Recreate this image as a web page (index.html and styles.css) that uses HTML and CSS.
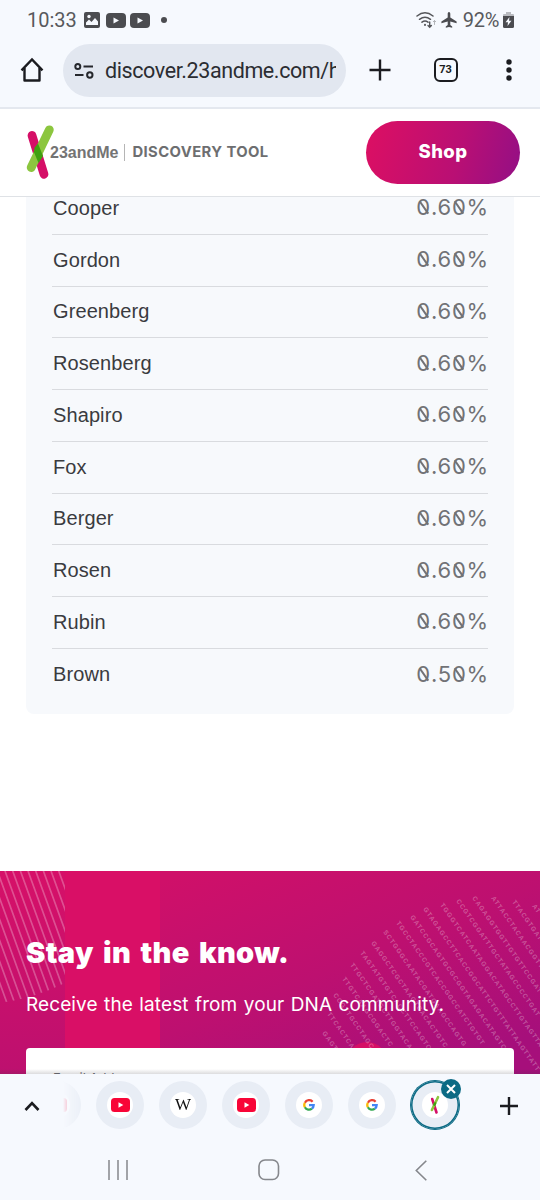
FILE: index.html
```html
<!DOCTYPE html>
<html lang="en">
<head>
  <meta charset="UTF-8">
  <meta name="viewport" content="width=device-width, initial-scale=1.0">
  <title>23andMe Discovery Tool</title>
  <link rel="stylesheet" href="styles.css">
</head>
<body>
  <div class="status-bar">
    <span class="clock">10:33</span>
    <svg class="status-photo" width="16" height="16" viewBox="0 0 16 16"><rect width="16" height="16" rx="2" fill="#4b4c50"/><circle cx="5" cy="4.5" r="1.7" fill="#f6f9fe"/><path d="M2 13V10.5L5 7.5L7.500 10L11 6L14 9.500V13Z" fill="#f6f9fe"/></svg>
    <svg width="20" height="15" viewBox="0 0 20 15"><rect width="20" height="15" rx="4" fill="#4b4c50"/><path d="M7.500 4.500L13 7.500L7.500 10.500Z" fill="#f6f9fe"/></svg>
    <svg width="20" height="15" viewBox="0 0 20 15"><rect width="20" height="15" rx="4" fill="#4b4c50"/><path d="M7.500 4.500L13 7.500L7.500 10.500Z" fill="#f6f9fe"/></svg>
    <span class="dot"></span>
    <div class="status-right">
      <svg width="21" height="18" viewBox="0 0 21 18" fill="none" stroke="#55565a" stroke-width="1.5" stroke-linecap="round"><path d="M1 5Q9 -1.500 17 5M3.500 8.300Q9 4 14.500 8.300M6 11.200Q9 9 12 11.200"/><path d="M9 13.800v.1" stroke-width="2"/><path d="M13.700 11v5M12 14.500l1.700 1.700l1.700-1.700" stroke-width="1.400"/><path d="M18.500 13.500V9.500M17.300 10.700l1.200-1.200l1.200 1.200" stroke="#b3b5b9" stroke-width="1"/></svg>
      <svg width="16" height="16" viewBox="0 0 16 16" fill="#4b4c50"><path d="M8 0C9 0 9.300 1 9.300 2V5.600L15.600 9.600V11.300L9.300 9.500V13L11.200 14.500V15.800L8 15L4.800 15.800V14.500L6.700 13V9.500L.4 11.300V9.600L6.700 5.600V2C6.700 1 7 0 8 0Z"/></svg>
      <span class="battery-text">92%</span>
      <svg width="11" height="16" viewBox="0 0 11 16"><path d="M3 0H8V2H10Q11 2 11 3V5H0V3Q0 2 1 2H3Z" fill="#b9bbc0"/><path d="M0 4H11V14.500Q11 16 9.500 16H1.500Q0 16 0 14.500Z" fill="#4b4c50"/><path d="M6.500 5L2.500 10.200H5L4.500 14L8.500 8.800H6Z" fill="#f6f9fe"/></svg>
    </div>
  </div>

  <div class="toolbar">
    <div class="tool home"><svg width="26" height="26" viewBox="0 0 26 26" fill="none" stroke="#1b1c20" stroke-width="2.400" stroke-linejoin="round"><path d="M5.500 11V23.500H20.500V11"/><path d="M2.500 13.300L13 2.500L23.500 13.300" stroke-linejoin="miter"/></svg></div>
    <div class="url-bar">
      <svg width="20" height="16" viewBox="0 0 20 16" fill="none" stroke="#25272c" stroke-width="2"><circle cx="3.800" cy="3.500" r="2.500"/><path d="M9.500 3.500H19M1 12H9.500"/><circle cx="15.800" cy="12" r="2.700"/></svg>
      <span class="url">discover.23andme.com/h</span>
    </div>
    <div class="tool new-tab"><svg width="22" height="22" viewBox="0 0 22 22" stroke="#1b1c20" stroke-width="2.400"><path d="M11 .5V21.500M.5 11H21.500"/></svg></div>
    <div class="tool tab-switch"><span class="tab-count">73</span></div>
    <div class="tool menu"><svg width="6" height="22" viewBox="0 0 6 22" fill="#1b1c20"><circle cx="3" cy="3" r="2.700"/><circle cx="3" cy="11" r="2.700"/><circle cx="3" cy="19" r="2.700"/></svg></div>
  </div>

  <div class="site-header">
    <svg class="logo" width="28" height="56" viewBox="0 0 28 56" fill="none" stroke-linecap="round" stroke-width="8.800"><path d="M6 10.500L18 49.300" stroke="#d50f67"/><path d="M23.300 4.800L5.200 42.500" stroke="#8cc63f"/><path d="M8.700 22.500L12 18.500L17 31L15.500 33.500L12.500 38L7.900 27Z" fill="#3fa010" stroke="none"/></svg>
    <span class="brand">23andMe</span>
    <span class="divider"></span>
    <span class="product">DISCOVERY TOOL</span>
    <a class="shop" href="#shop">Shop</a>
  </div>

  <div class="content">
    <div class="name-card">
      <div class="row"><span>Cooper</span><span class="pct"><i>0</i>.6<i>0</i>%</span></div>
      <div class="row"><span>Gordon</span><span class="pct"><i>0</i>.6<i>0</i>%</span></div>
      <div class="row"><span>Greenberg</span><span class="pct"><i>0</i>.6<i>0</i>%</span></div>
      <div class="row"><span>Rosenberg</span><span class="pct"><i>0</i>.6<i>0</i>%</span></div>
      <div class="row"><span>Shapiro</span><span class="pct"><i>0</i>.6<i>0</i>%</span></div>
      <div class="row"><span>Fox</span><span class="pct"><i>0</i>.6<i>0</i>%</span></div>
      <div class="row"><span>Berger</span><span class="pct"><i>0</i>.6<i>0</i>%</span></div>
      <div class="row"><span>Rosen</span><span class="pct"><i>0</i>.6<i>0</i>%</span></div>
      <div class="row"><span>Rubin</span><span class="pct"><i>0</i>.6<i>0</i>%</span></div>
      <div class="row"><span>Brown</span><span class="pct"><i>0</i>.5<i>0</i>%</span></div>
    </div>
  </div>

  <div class="newsletter">
    <svg class="pattern" width="540" height="203" viewBox="0 0 540 203">
      <defs>
        <linearGradient id="side" x1="0" y1="0" x2="0" y2="1"><stop offset="0" stop-color="#d61068"/><stop offset="1" stop-color="#bd106f"/></linearGradient>
        <clipPath id="stripes"><path d="M0 0H65V112Q35 127 0 132Z"/></clipPath>
      </defs>
      <rect width="65" height="203" fill="url(#side)"/>
      <rect x="65" width="95" height="203" fill="#d90f66"/>
      <g clip-path="url(#stripes)" stroke="#fff" stroke-opacity=".27" stroke-width="1.700">
        <path d="M-41 0l48 132M-33.300 0l48 132M-25.600 0l48 132M-18 0l48 132M-10.300 0l48 132M-2.600 0l48 132M5 0l48 132M12.700 0l48 132M20.400 0l48 132M28 0l48 132M35.700 0l48 132M43.400 0l48 132M51 0l48 132M58.700 0l48 132"/>
      </g>
      <circle cx="367" cy="191" r="20" fill="#d60f66"/>
      <g class="dna">
        <text transform="translate(322 162) rotate(55)">GAGTC</text>
        <text transform="translate(327 143) rotate(55)">TTCACTCAG</text>
        <text transform="translate(333 124) rotate(55)">CCGTTGCCTAGCA</text>
        <text transform="translate(342 108) rotate(55)">TTGTCAAGCGGACTC</text>
        <text transform="translate(350 94) rotate(55)">TTGCTCGATGCTTGGTACA</text>
        <text transform="translate(360 82) rotate(55)">TAGTATGTGTCACCTTCCAGTC</text>
        <text transform="translate(371 72) rotate(55)">GAGGCTCGCTAAGTCACACTGTC</text>
        <text transform="translate(383 61) rotate(55)">SCTGGGCAATACGATGAAGCCAGTG</text>
        <text transform="translate(396 52) rotate(55)">TGCCTACCCGTCACCGGCCATCTGTGT</text>
        <text transform="translate(410 46) rotate(55)">GATCCGCAGTGCGCGGTAGAGACATAGTC</text>
        <text transform="translate(423 38) rotate(55)">GTAGAGCCTTCACCGGCATTCTGTTTATTAAGTTATT</text>
        <text transform="translate(440 34) rotate(55)">TGGGTCATCAATAGGACATAGCCTTGTAGTTA</text>
        <text transform="translate(456 30) rotate(55)">CCGTCGGATTTGCTATAGCCCCTGAT</text>
        <text transform="translate(472 27) rotate(55)">CAGAGGTGGTTGTGTTCCGAT</text>
        <text transform="translate(491 27) rotate(55)">ATTACCTACAACGGTT</text>
        <text transform="translate(512 31) rotate(55)">TTACGTGAT</text>
        <text transform="translate(532 35) rotate(55)">AT</text>
      </g>
    </svg>
    <h2>Stay in the know.</h2>
    <p>Receive the latest from your DNA community.</p>
    <div class="email-field">Email Address</div>
  </div>

  <div class="tab-strip">
    <div class="strip-button up"><svg width="16" height="12" viewBox="0 0 16 12" fill="none" stroke="#1b1c20" stroke-width="2.600"><path d="M1.500 10L8 3.200L14.500 10"/></svg></div>
    <div class="tabs">
      <div class="tab"><span class="favicon"><svg width="19" height="14" viewBox="0 0 19 14"><rect width="19" height="14" rx="3.500" fill="#f80537"/></svg></span></div>
      <div class="tab"><span class="favicon"><svg width="19" height="14" viewBox="0 0 19 14"><rect width="19" height="14" rx="3.500" fill="#f80537"/><path d="M7.500 4.200L12.300 7L7.500 9.800Z" fill="#fff"/></svg></span></div>
      <div class="tab"><span class="favicon wiki">W</span></div>
      <div class="tab"><span class="favicon"><svg width="19" height="14" viewBox="0 0 19 14"><rect width="19" height="14" rx="3.500" fill="#f80537"/><path d="M7.500 4.200L12.300 7L7.500 9.800Z" fill="#fff"/></svg></span></div>
      <div class="tab"><span class="favicon"><svg width="12" height="12" viewBox="0 0 12 12" fill="none" stroke-width="2.300"><path d="M9.600 2.700A4.700 4.700 0 0 0 1.900 3.700" stroke="#e94235"/><path d="M1.900 3.700A4.700 4.700 0 0 0 1.900 8.300" stroke="#fabb05"/><path d="M1.900 8.300A4.700 4.700 0 0 0 8.900 9.700" stroke="#34a853"/><path d="M8.900 9.700A4.700 4.700 0 0 0 10.700 6.100H6" stroke="#4285f4"/></svg></span></div>
      <div class="tab"><span class="favicon"><svg width="12" height="12" viewBox="0 0 12 12" fill="none" stroke-width="2.300"><path d="M9.600 2.700A4.700 4.700 0 0 0 1.900 3.700" stroke="#e94235"/><path d="M1.900 3.700A4.700 4.700 0 0 0 1.900 8.300" stroke="#fabb05"/><path d="M1.900 8.300A4.700 4.700 0 0 0 8.900 9.700" stroke="#34a853"/><path d="M8.900 9.700A4.700 4.700 0 0 0 10.700 6.100H6" stroke="#4285f4"/></svg></span></div>
      <div class="tab active"><span class="favicon"><svg width="10" height="20" viewBox="0 0 10 20" fill="none" stroke-linecap="round" stroke-width="2.600"><path d="M2.200 4L6.500 17.500" stroke="#d50f67"/><path d="M8 2.200L1.900 15" stroke="#8cc63f"/><path d="M4.400 9.700L5 8.500" stroke="#3fa010"/></svg></span>
        <span class="close"><svg width="10" height="10" viewBox="0 0 10 10" stroke="#fff" stroke-width="2"><path d="M1 1L9 9M9 1L1 9"/></svg></span>
      </div>
    </div>
    <div class="strip-button add"><svg width="20" height="20" viewBox="0 0 20 20" stroke="#1b1c20" stroke-width="2.400"><path d="M10 1V19M1 10H19"/></svg></div>
  </div>

  <div class="nav-bar">
    <svg width="20" height="20" viewBox="0 0 20 20" stroke="#85878c" stroke-width="1.500"><path d="M1 0V20M10 0V20M19 0V20"/></svg>
    <svg width="22" height="22" viewBox="0 0 22 22" fill="none" stroke="#85878c" stroke-width="1.600"><rect x="1" y="1" width="19.500" height="19.500" rx="6"/></svg>
    <svg width="12" height="21" viewBox="0 0 12 21" fill="none" stroke="#85878c" stroke-width="1.600"><path d="M11.300 .7L1.300 10.500L11.300 20.300"/></svg>
  </div>
</body>
</html>
```
FILE: styles.css
```css
* {
  box-sizing: border-box;
}

body {
  margin: 0;
  width: 540px;
  height: 1200px;
  overflow: hidden;
  display: flex;
  flex-direction: column;
  background: #fff;
  font-family: Inter, "Liberation Sans", sans-serif;
}

svg {
  display: block;
  flex: none;
}

/* Android status bar */
.status-bar {
  height: 40px;
  padding: 0 26px 0 27px;
  display: flex;
  align-items: center;
  gap: 4px;
  background: #f6f9fe;
  font-family: Roboto, sans-serif;
  font-size: 20px;
  color: #58595d;
}

.clock {
  width: 53px;
}

.status-photo {
  margin-right: 2px;
}

.dot {
  width: 6px;
  height: 6px;
  margin-left: 7px;
  border-radius: 50%;
  background: #4b4c50;
}

.status-right {
  margin-left: auto;
  display: flex;
  align-items: center;
  gap: 4px;
}

.battery-text {
  margin-left: 2px;
  letter-spacing: -0.3px;
}

/* Browser toolbar */
.toolbar {
  height: 69px;
  padding: 4px 0 12px;
  display: flex;
  background: #f6f9fe;
  border-bottom: 2px solid #e4e8ef;
}

.tool {
  display: flex;
  align-items: center;
  justify-content: center;
}

.home {
  width: 63px;
}

.url-bar {
  width: 283px;
  height: 53px;
  padding: 0 10px 0 11px;
  display: flex;
  align-items: center;
  gap: 11px;
  border-radius: 27px;
  background: #e2e7f0;
}

.url {
  flex: 1;
  overflow: hidden;
  white-space: nowrap;
  font-family: Roboto, sans-serif;
  font-size: 21.5px;
  letter-spacing: -0.4px;
  color: #2b2d32;
}

.new-tab {
  width: 68px;
}

.tab-switch {
  width: 63px;
}

.menu {
  width: 63px;
}

.tab-count {
  width: 24px;
  height: 24px;
  border: 2.5px solid #1b1c20;
  border-radius: 6px;
  font-family: Roboto, sans-serif;
  font-size: 11px;
  font-weight: 700;
  line-height: 20px;
  text-align: center;
  color: #1b1c20;
}

/* Site header */
.site-header {
  height: 88px;
  padding: 0 20px 0 26px;
  display: flex;
  align-items: center;
  background: #fff;
  border-bottom: 1px solid #dfe2e6;
}

.brand {
  margin-left: -4px;
  font-family: "Liberation Sans", sans-serif;
  font-size: 16px;
  font-weight: 700;
  color: #747474;
}

.divider {
  width: 1px;
  height: 17px;
  margin: 0 7px 0 6px;
  background: #b5b5b5;
}

.product {
  padding-bottom: 2px;
  font-size: 14.8px;
  font-weight: 700;
  color: #6d6e70;
  letter-spacing: 0.4px;
}

.shop {
  width: 154px;
  height: 63px;
  margin-left: auto;
  padding-bottom: 4px;
  display: flex;
  align-items: center;
  justify-content: center;
  border-radius: 32px;
  background: linear-gradient(105deg, #da0f64 5%, #b90f74 60%, #930f85);
  color: #fff;
  font-size: 18.5px;
  font-weight: 800;
  letter-spacing: 0.4px;
  text-decoration: none;
}

/* Surname list, scrolled under the header */
.content {
  height: 674px;
  padding: 0 26px;
  overflow: hidden;
}

.name-card {
  margin-top: -14px;
  padding: 0 26px 13px;
  border-radius: 8px;
  background: #f7f9fc;
}

.row {
  height: 51.75px;
  padding-left: 1px;
  display: flex;
  align-items: center;
  justify-content: space-between;
  border-bottom: 1px solid #d9dbdf;
  font-family: "Liberation Sans", sans-serif;
  font-size: 20px;
  letter-spacing: 0.1px;
  color: #3a3b3f;
}

.row:last-child {
  border-bottom: none;
}

.pct {
  margin-right: -1px;
  padding-bottom: 2px;
  font-family: Inter, sans-serif;
  font-size: 22px;
  letter-spacing: 0.8px;
  color: #717276;
}

.pct i {
  position: relative;
  font-style: normal;
}

/* backslash through the zeros */
.pct i::after {
  content: "";
  position: absolute;
  left: 6.5px;
  top: 6px;
  width: 1.8px;
  height: 15px;
  background: #717276;
  transform: rotate(-35deg);
}

/* Newsletter banner */
.newsletter {
  position: relative;
  height: 203px;
  padding: 0 26px;
  overflow: hidden;
  background: linear-gradient(158deg, #cf1069 18%, #bd1070 55%, #a60f7b 90%);
  color: #fff;
}

.newsletter::after {
  content: "";
  position: absolute;
  left: 0;
  right: 0;
  bottom: 0;
  height: 5px;
  background: linear-gradient(transparent, rgba(60, 60, 70, 0.18));
}

.pattern {
  position: absolute;
  left: 0;
  top: 0;
}

.dna {
  fill: #fff;
  fill-opacity: 0.3;
  font-family: "Liberation Sans", sans-serif;
  font-size: 6.5px;
  font-weight: 700;
  letter-spacing: 1px;
}

.newsletter h2 {
  position: relative;
  margin: 0;
  padding-top: 64px;
  font-size: 29px;
  line-height: 36px;
  font-weight: 900;
  letter-spacing: 0.4px;
  word-spacing: 3px;
}

.newsletter p {
  position: relative;
  margin: 0;
  padding-top: 21px;
  font-size: 19px;
  line-height: 26px;
  letter-spacing: 0.1px;
  word-spacing: 1px;
  white-space: nowrap;
}

.email-field {
  position: relative;
  height: 60px;
  margin-top: 30px;
  padding: 22px 27px;
  border-radius: 4px;
  background: #fff;
  font-size: 13px;
  line-height: 16px;
  color: #6a6b70;
}

/* Tab group strip */
.tab-strip {
  height: 63px;
  display: flex;
  background: #f6f9fe;
}

.strip-button {
  display: flex;
  align-items: center;
  justify-content: center;
}

.up {
  width: 63px;
}

.add {
  width: 63px;
}

.tabs {
  width: 414px;
  padding-top: 7px;
  display: flex;
  gap: 15px;
  overflow: hidden;
  -webkit-mask-image: linear-gradient(to right, transparent, #000 24px);
  mask-image: linear-gradient(to right, transparent, #000 24px);
}

.tab {
  position: relative;
  flex: none;
  width: 48px;
  height: 48px;
  display: flex;
  align-items: center;
  justify-content: center;
  border-radius: 50%;
  background: #e8edf5;
}

.tab:first-child {
  margin-left: -30px;
}

.favicon {
  width: 26px;
  height: 26px;
  display: flex;
  align-items: center;
  justify-content: center;
  border-radius: 50%;
  background: #fff;
}

.wiki {
  font-family: "Liberation Serif", serif;
  font-size: 17px;
  color: #111;
}

.active {
  box-shadow: 0 0 0 1px #0b6a84, inset 0 0 0 1.5px #0b6a84;
}

.close {
  position: absolute;
  right: -2px;
  top: -2px;
  width: 20px;
  height: 20px;
  display: flex;
  align-items: center;
  justify-content: center;
  border-radius: 50%;
  background: #0b6a84;
}

/* System navigation */
.nav-bar {
  height: 63px;
  padding: 3px 113px 0 108px;
  display: flex;
  align-items: center;
  gap: 130px;
  background: #f6f9fe;
}

.nav-bar svg:last-child {
  margin-left: 5px;
}
```
